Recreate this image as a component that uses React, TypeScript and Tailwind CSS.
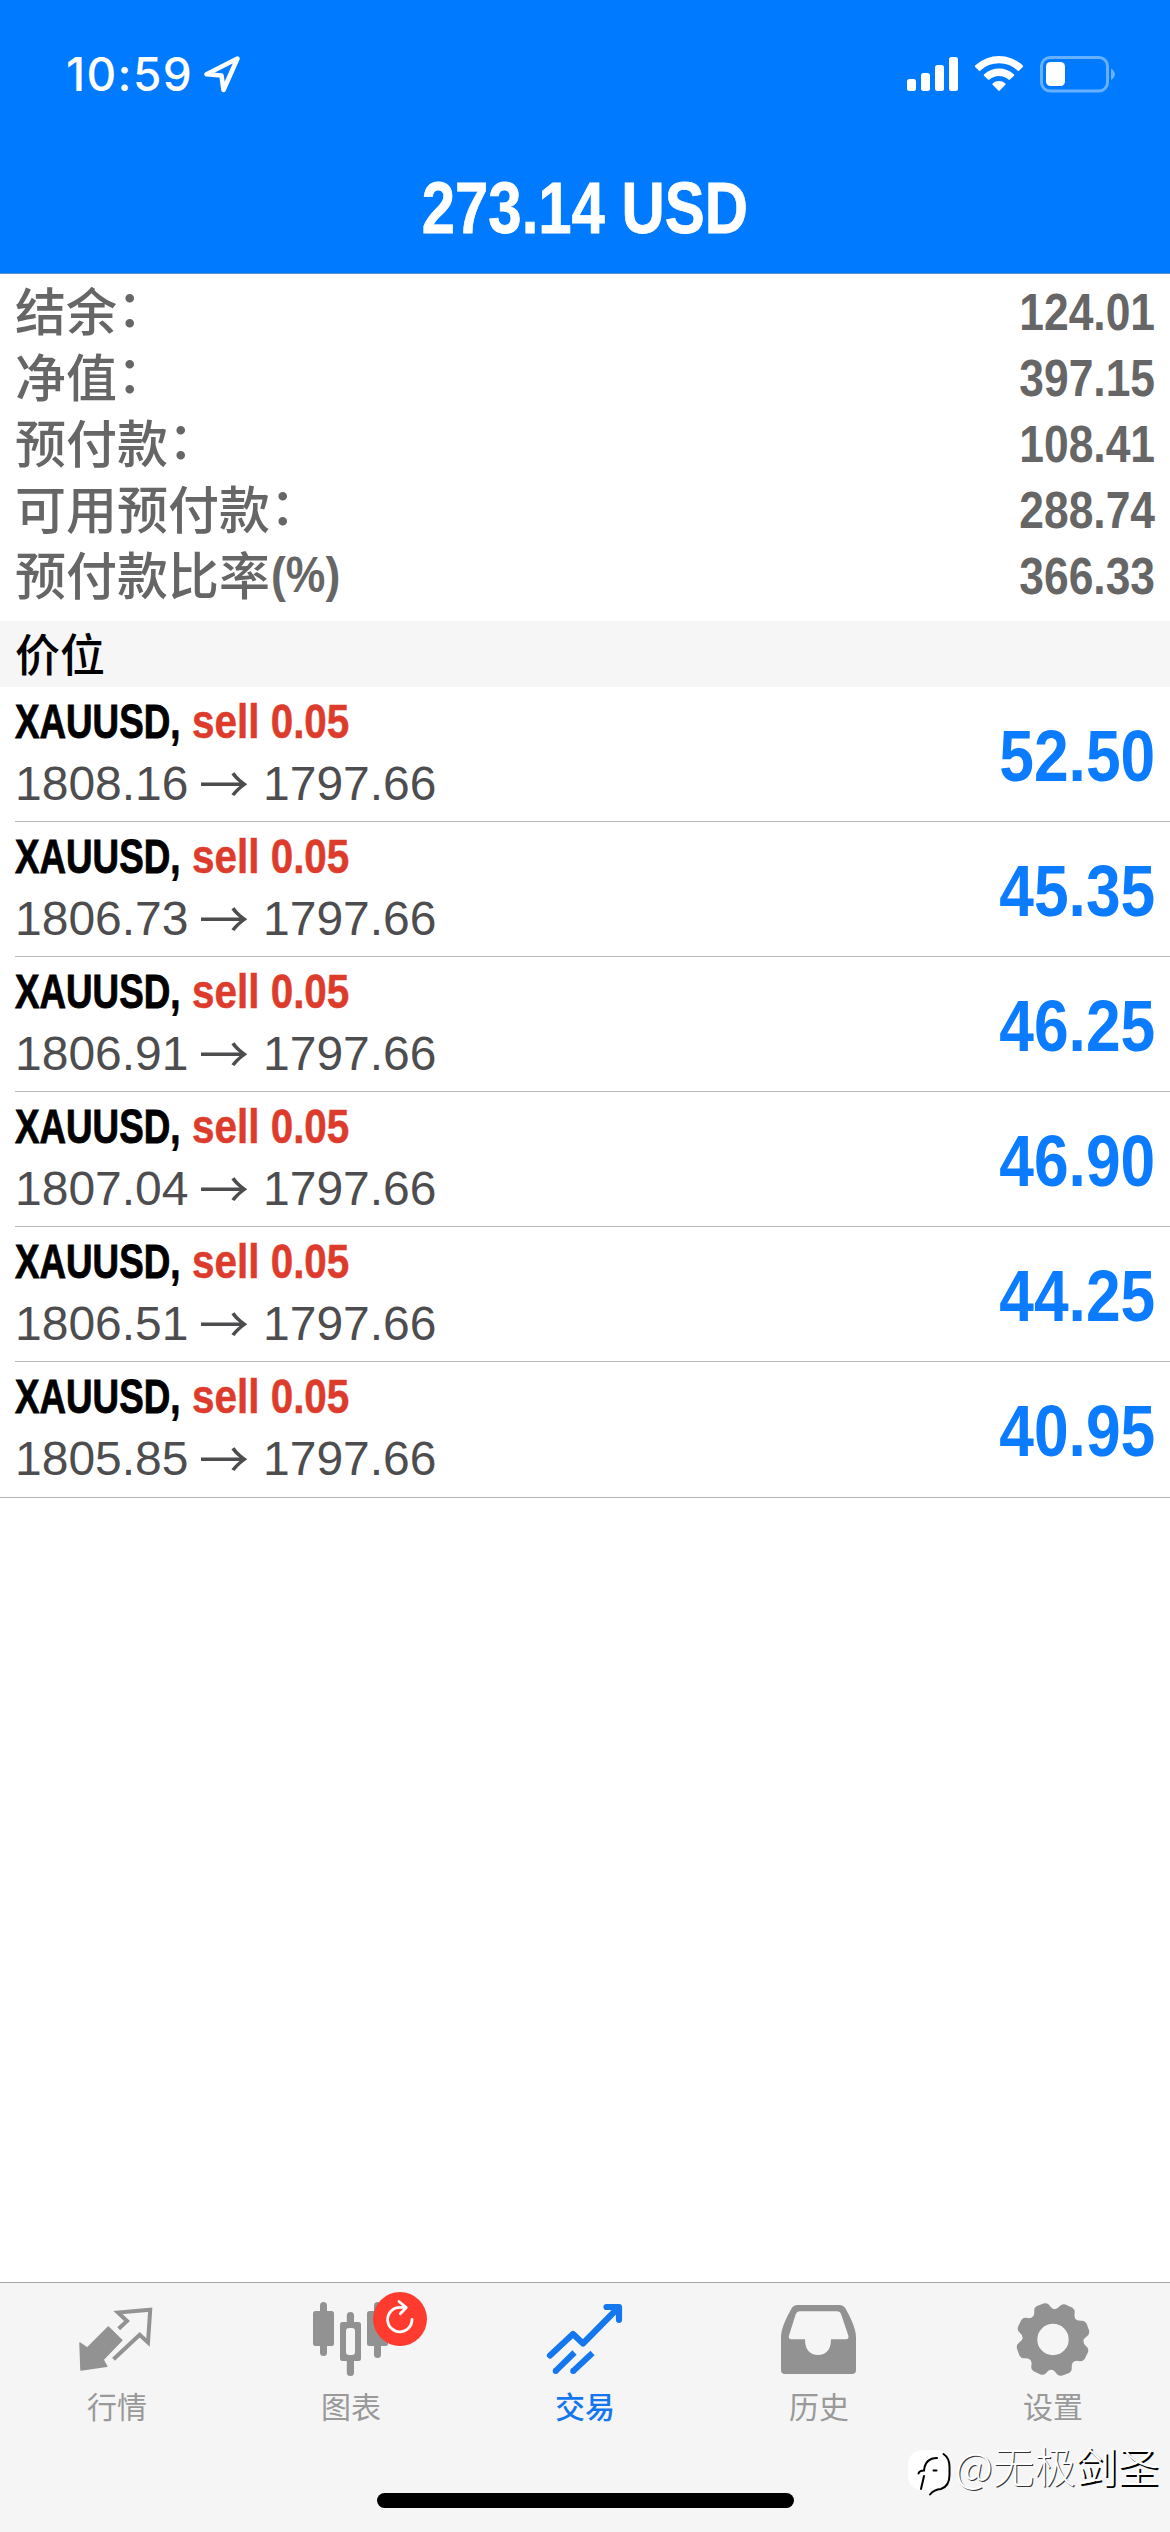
import React from "react";

const summary = [
  { label: "结余", colon: true, value: "124.01" },
  { label: "净值", colon: true, value: "397.15" },
  { label: "预付款", colon: true, value: "108.41" },
  { label: "可用预付款", colon: true, value: "288.74" },
  { label: "预付款比率", colon: false, value: "366.33" },
];

const positions = [
  { open: "1808.16", profit: "52.50" },
  { open: "1806.73", profit: "45.35" },
  { open: "1806.91", profit: "46.25" },
  { open: "1807.04", profit: "46.90" },
  { open: "1806.51", profit: "44.25" },
  { open: "1805.85", profit: "40.95" },
];

function polar(deg: number, r: number) {
  const a = ((deg - 90) * Math.PI) / 180;
  return `${(1053 + r * Math.cos(a)).toFixed(2)} ${(2339.5 + r * Math.sin(a)).toFixed(2)}`;
}

// Eight teeth with rounded corners, joined by curved valleys.
const gearPath =
  Array.from({ length: 8 }, (_, i) => {
    const c = 25.5 + i * 45;
    return `${i ? "L" : "M"}${polar(c - 13.5, 34.4)}Q${polar(c - 11.5, 37)} ${polar(c - 6, 37.2)}L${polar(c + 6, 37.2)}Q${polar(c + 11.5, 37)} ${polar(c + 13.5, 34.4)}Q${polar(c + 22.5, 26.8)} ${polar(c + 31.5, 34.4)}`;
  }).join("") + "Z M1037.3 2339.5a15.7 15.7 0 1 0 31.4 0a15.7 15.7 0 1 0 -31.4 0Z";

function StatusBar() {
  return (
    <div className="flex h-[148px] items-center justify-between pr-[55px] pl-[66px] text-white">
      <div className="flex items-center">
        <span className="w-[137px] font-['Inter',sans-serif] text-[46px] leading-[46px] font-medium tracking-[1.4px]">10:59</span>
        <svg className="h-[38px] w-[38px]" viewBox="203 56 38 38" fill="none" stroke="currentColor" strokeWidth="4.6" strokeLinejoin="round">
          <path d="M237.5 59.5 L206.5 75.3 L221.5 76.5 L223.5 91 Z" />
        </svg>
      </div>
      <svg className="h-[40px] w-[209px]" viewBox="906 54 209 40" fill="currentColor">
        <rect x="907" y="79" width="9" height="12" rx="2.5" />
        <rect x="921" y="73" width="9" height="18" rx="2.5" />
        <rect x="935" y="65" width="9" height="26" rx="2.5" />
        <rect x="949" y="57" width="9" height="34" rx="2.5" />
        <path d="M975.2 67 Q974.5 66.2 975.4 65.2 A35 35 0 0 1 1022.6 65.2 Q1023.5 66.2 1022.8 67 L1019 70.7 Q1018.3 71.2 1017.6 70.6 A27 27 0 0 0 980.4 70.6 Q979.7 71.2 979 70.7Z" />
        <path d="M984 75.8 Q983.3 75 984.2 74.2 A22 22 0 0 1 1013.8 74.2 Q1014.7 75 1014 75.8 L1010 79.5 Q1009.3 80.1 1008.5 79.5 A14.5 14.5 0 0 0 989.5 79.5 Q988.7 80.1 988 79.5Z" />
        <path d="M992.6 84.8 Q992 84 992.8 83.2 A10 10 0 0 1 1005.2 83.2 Q1006 84 1005.4 84.8 L999.7 90.6 Q999 91.2 998.3 90.6Z" />
        <rect x="1041.5" y="57.5" width="66" height="33.5" rx="8.5" fill="none" stroke="#66b0ff" strokeWidth="3" />
        <rect x="1046" y="62" width="19" height="24" rx="4.5" />
        <path d="M1111 68.5 Q1115 71 1115 74.2 T1111 80Z" fill="#66b0ff" />
      </svg>
    </div>
  );
}

function Summary() {
  return (
    <div className="flex h-[347px] flex-col px-[15px] pt-[2px] text-[#666666]">
      {summary.map((row) => (
        <div key={row.label} className="flex h-[66px] items-center justify-between">
          <span className="flex items-center text-[51px] leading-[66px] font-medium">
            {row.label}
            {row.colon ? (
              <span className="-translate-y-[4px]">：</span>
            ) : (
              <span className="origin-left translate-x-[1px] translate-y-[2px] scale-x-[0.89] font-['Liberation_Sans',sans-serif] text-[50px] font-bold">(%)</span>
            )}
          </span>
          <span className="origin-right translate-y-[4px] scale-x-[0.87] font-['Liberation_Sans',sans-serif] text-[51px] leading-[66px] font-bold">
            {row.value}
          </span>
        </div>
      ))}
    </div>
  );
}

function PositionRow({ open, profit, last }: { open: string; profit: string; last: boolean }) {
  return (
    <div className={last ? "h-[136px] border-b border-[#b4b4b6] pl-[15px]" : "h-[135px] pl-[15px]"}>
      <div className={last ? "flex h-[135px] justify-between pr-[15px]" : "flex h-[135px] justify-between border-b border-[#b9b8bd] pr-[15px]"}>
        <div className="flex flex-col pt-[3px] font-['Liberation_Sans',sans-serif]">
          <div className="flex h-[62px] text-[49px] leading-[62px] font-bold whitespace-nowrap">
            <span className="w-[177px] origin-left scale-x-[0.75] text-black [-webkit-text-stroke:0.9px_#000000]">XAUUSD, </span>
            <span className="origin-left scale-x-[0.825] text-[#dd3c2d] [-webkit-text-stroke:0.5px_#dd3c2d]">sell 0.05</span>
          </div>
          <div className="flex h-[64px] items-center text-[48px] leading-[64px] whitespace-nowrap text-[#4d4d4f]">
            <span className="w-[184px]">{open}</span>
            <span className="w-[64px] -translate-y-[3px] font-['Noto_Sans_CJK_SC',sans-serif] text-[50px]">→</span>
            <span>1797.66</span>
          </div>
        </div>
        <div className="origin-right scale-x-[0.865] font-['Liberation_Sans',sans-serif] text-[72px] leading-[138px] font-bold text-[#0b7bff]">
          {profit}
        </div>
      </div>
    </div>
  );
}

function Tab({ label, x, active, children }: { label: string; x: number; active?: boolean; children: React.ReactNode }) {
  return (
    <div className={active ? "flex w-[234px] flex-col items-center pt-[12px] text-[#1477ee]" : "flex w-[234px] flex-col items-center pt-[12px] text-[#929292]"}>
      <svg className="h-[84px] w-[120px] overflow-visible" viewBox={`${x} 2295 120 84`} fill="currentColor">
        {children}
      </svg>
      <span className={active ? "mt-[6px] text-[30px] leading-[40px] font-medium" : "mt-[6px] text-[30px] leading-[40px] text-[#999999]"}>{label}</span>
    </div>
  );
}

export default function App() {
  return (
    <div className="relative flex h-[2532px] w-[1170px] flex-col overflow-hidden bg-white font-['Noto_Sans_CJK_SC',sans-serif]">
      <header className="h-[274px] border-b border-[#5a8fcc] bg-[#007aff]">
        <StatusBar />
        <div className="flex h-[120px] items-center justify-center">
          <h1 className="scale-x-[0.82] font-['Liberation_Sans',sans-serif] text-[73px] leading-[120px] font-bold whitespace-nowrap text-white [-webkit-text-stroke:0.8px_#ffffff]">
            273.14 USD
          </h1>
        </div>
      </header>
      <Summary />
      <div className="h-[66px] bg-[#f6f6f6] pl-[15px] text-[45px] leading-[63px] font-medium text-black">价位</div>
      <main className="flex flex-1 flex-col">
        {positions.map((p, i) => (
          <PositionRow key={p.open} open={p.open} profit={p.profit} last={i === positions.length - 1} />
        ))}
      </main>
      <nav className="flex h-[250px] flex-col justify-between border-t border-[#a6a6a6] bg-[#f5f5f5]">
        <div className="flex">
          <Tab label="行情" x={57}>
            <path d="M80 2343L87.3 2348L108.3 2327L121.8 2340.3L103 2359.7L106.8 2366.3L81 2370Z" stroke="currentColor" strokeWidth="1.5" strokeLinejoin="round" />
            <path d="M118.7 2328.7L127 2321L118 2312.5L150.2 2309.8L148 2342.5L139.7 2334.7L113.5 2359.3" fill="none" stroke="currentColor" strokeWidth="4" />
          </Tab>
          <Tab label="图表" x={291}>
            <rect x="320" y="2302" width="7" height="54" rx="3.5" />
            <rect x="313" y="2311" width="21" height="35" rx="2.5" />
            <rect x="346.8" y="2312" width="7.2" height="64" rx="3.5" />
            <rect x="340" y="2322" width="21" height="39" rx="2.5" />
            <rect x="346" y="2328" width="9" height="27" rx="3" fill="#f5f5f5" />
            <rect x="374" y="2302" width="7" height="56" rx="3.5" />
            <rect x="367" y="2311" width="21" height="35" rx="2.5" />
            <circle cx="400" cy="2319" r="27" fill="#ff3b30" />
            <g fill="none" stroke="#ffffff" strokeWidth="2.8" strokeLinecap="round" strokeLinejoin="round">
              <path d="M412 2319.3A12.2 12.2 0 1 1 399.8 2307.4H405.5" />
              <path d="M399 2301.5L406.3 2307.5L400.3 2313.8" />
            </g>
          </Tab>
          <Tab label="交易" x={525} active>
            <g fill="none" stroke="currentColor" strokeWidth="6.2" strokeLinecap="round" strokeLinejoin="round">
              <path d="M550 2355.5L573 2334L583 2343.5L618 2308" />
              <path d="M606.5 2307H619V2319.8" />
            </g>
            <path d="M555.5 2371.2L574.5 2352.5M573 2371.2L592.5 2353" stroke="currentColor" strokeWidth="6" />
            <circle cx="555.7" cy="2371" r="3" />
            <circle cx="573.2" cy="2371" r="3" />
          </Tab>
          <Tab label="历史" x={759}>
            <path fillRule="evenodd" d="M797.5 2305H839.5Q843.5 2305 845.5 2308.5C850 2316.5 856 2328 856 2337V2370Q856 2374 852 2374H785Q781 2374 781 2370V2337C781 2328 787 2316.5 791.5 2308.5Q793.5 2305 797.5 2305ZM799.5 2311.3Q797 2311.3 795.8 2314L789 2335.5Q788 2339.3 791.5 2339.3H805C805 2350 810 2355 818 2355C826 2355 831 2350 831 2339.3H846Q849.3 2339.3 848.3 2335.5L841.2 2314.5Q840 2311.3 837 2311.3Z" />
          </Tab>
          <Tab label="设置" x={993}>
            <path fillRule="evenodd" d={gearPath} />
          </Tab>
        </div>
        <div className="mb-[24px] ml-[377px] h-[15px] w-[417px] rounded-full bg-black" />
      </nav>
      <div className="absolute top-[2433px] left-[906px] flex items-center">
        <svg className="mt-[14px] h-[50px] w-[48px]" viewBox="906 2444 48 50" fill="none" strokeLinecap="round">
          <path d="M923 2447H937Q949 2448 949 2461V2474Q949 2484 940 2487Q933 2488 930 2492L927 2487H920Q908 2485 908 2472V2461Q909 2448 923 2447Z" fill="#ffffff" />
          <path d="M943.5 2451Q949.5 2455 949.5 2464V2472Q949.5 2483 941 2486Q934 2486.5 930 2491.5" stroke="#000000" strokeWidth="2" />
          <path d="M918.5 2470.5Q919.5 2467.5 924 2467.5C925 2458 930 2455 937 2455M924 2473L921 2486M933.5 2467.5H936.5" stroke="#000000" strokeWidth="2" />
        </svg>
        <span className="ml-[1px] text-[41.5px] leading-[56px] font-light whitespace-nowrap text-white">
          <span className="[text-shadow:1px_1px_0_#333333]">@无极</span>
          <span className="[text-shadow:2px_1.5px_0_#000000]">剑圣</span>
        </span>
      </div>
    </div>
  );
}
